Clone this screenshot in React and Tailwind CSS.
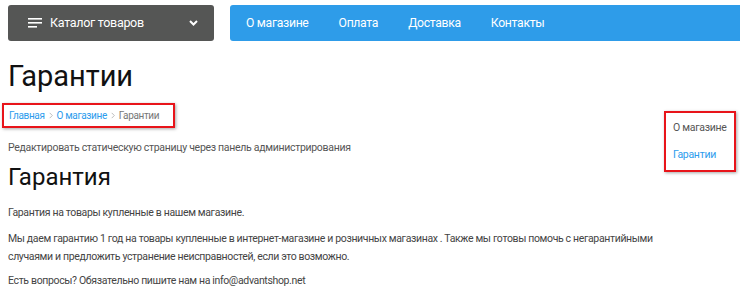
import React from 'react';

const navItems = ['О магазине', 'Оплата', 'Доставка', 'Контакты'];

const Chevron = () => (
  <svg width="6" height="7" viewBox="0 0 6 8" className="mx-[3px]">
    <path d="M1.5 1 L4.5 4 L1.5 7" fill="none" stroke="#b5b5b5" strokeWidth="1" />
  </svg>
);

const App = () => {
  return (
    <div className="w-[740px] h-[307px] overflow-hidden bg-white text-[#333]" style={{ fontFamily: 'Roboto, "Open Sans", sans-serif' }}>
      {/* header */}
      <div className="flex pt-[5px] pl-2 gap-4">
        <div className="w-[206px] h-9 bg-[#555655] rounded-[3px] flex items-center pl-5 pr-4 text-white shrink-0">
          <svg width="14" height="10" viewBox="0 0 14 10" className="mr-[8px]">
            <rect x="0" y="0" width="14" height="1.6" fill="#fff" />
            <rect x="0" y="4" width="14" height="1.6" fill="#fff" />
            <rect x="0" y="8" width="9" height="1.6" fill="#fff" />
          </svg>
          <span className="text-[12.5px] tracking-[-0.3px]">Каталог товаров</span>
          <svg width="9" height="6" viewBox="0 0 9 6" className="ml-auto">
            <path d="M1 1 L4.5 4.5 L8 1" fill="none" stroke="#fff" strokeWidth="2" />
          </svg>
        </div>
        <div className="flex-1 h-9 bg-[#2e9ce9] rounded-l-[3px] flex items-center pl-px">
          {navItems.map((item) => (
            <span key={item} className="px-[15px] text-[12.2px] tracking-[-0.3px] text-white whitespace-nowrap">{item}</span>
          ))}
        </div>
      </div>

      <h1 className="pl-2 mt-[17px] text-[29px] leading-[36px] text-[#111]">Гарантии</h1>

      <div className="flex">
        <div className="flex-1 pl-[2px]">
          <div className="mt-[9px] w-[173px] h-[25px] border-2 border-[#e8141a] shadow-[1px_1px_3px_rgba(0,0,0,0.35)] flex items-center pl-[5px] text-[10px] tracking-[-0.35px] whitespace-nowrap">
            <span className="text-[#2d9ced]">Главная</span>
            <Chevron />
            <span className="text-[#2d9ced]">О магазине</span>
            <Chevron />
            <span className="text-[#777]">Гарантии</span>
          </div>

          <div className="pl-[6px]">
            <p className="mt-[13px] text-[10.5px] tracking-[-0.3px] leading-[14px] text-[#555]">Редактировать статическую страницу через панель администрирования</p>
            <h2 className="mt-[7px] text-[24px] leading-[30px] text-[#111]">Гарантия</h2>
            <div className="text-[10.5px] tracking-[-0.35px] leading-[18px] text-[#444]">
              <p className="mt-[12px]">Гарантия на товары купленные в нашем магазине.</p>
              <p className="mt-[8px] whitespace-nowrap">Мы даем гарантию 1 год на товары купленные в интернет-магазине и розничных магазинах . Также мы готовы помочь с негарантийными<br />случаями и предложить устранение неисправностей, если это возможно.</p>
              <p className="mt-[6px]">Есть вопросы? Обязательно пишите нам на info@advantshop.net</p>
            </div>
          </div>
        </div>

        <div className="w-[72px] h-[61px] mt-[17px] mr-1 border-2 border-[#e8141a] shadow-[1px_1px_3px_rgba(0,0,0,0.35)] pl-[7px] pt-[7px] text-[10.5px] tracking-[-0.3px] shrink-0 whitespace-nowrap">
          <div className="text-[#555]">О магазине</div>
          <div className="mt-[11px] text-[#2d9ced]">Гарантии</div>
        </div>
      </div>
    </div>
  );
};

export default App;
